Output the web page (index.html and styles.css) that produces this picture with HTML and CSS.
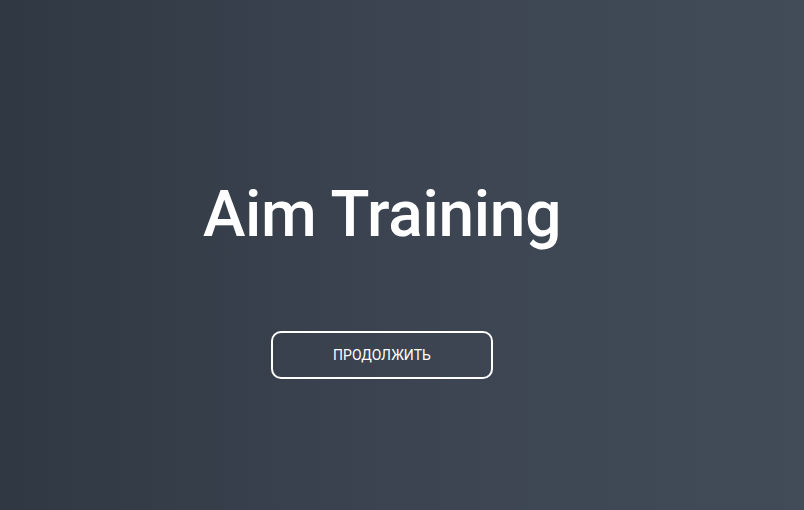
FILE: index.html
```html
<!DOCTYPE html>
<html lang="ru">
<head>
<meta charset="utf-8">
<title>Aim Training</title>
<link rel="stylesheet" href="styles.css">
</head>
<body>
<main class="screen">
  <h1 class="title">Aim Training</h1>
  <button class="start-btn" type="button">продолжить</button>
</main>
</body>
</html>
```
FILE: styles.css
```css
html, body {
  margin: 0;
  padding: 0;
  height: 100%;
}
body {
  background: linear-gradient(90deg, #303843 0%, #3b4450 50%, #424c59 100%);
  font-family: Roboto, "Liberation Sans", sans-serif;
  color: #fff;
  overflow: hidden;
}
.screen {
  box-sizing: border-box;
  height: 510px;
  padding: 177px 40px 0 0;
  display: flex;
  flex-direction: column;
  align-items: center;
}
.title {
  margin: 0;
  font-size: 64px;
  font-weight: 500;
  line-height: 75px;
  letter-spacing: -0.3px;
}
.start-btn {
  margin-top: 79px;
  width: 222px;
  height: 48px;
  background: transparent;
  border: 2px solid #fff;
  border-radius: 10px;
  color: #fff;
  font-family: Roboto, "Liberation Sans", sans-serif;
  font-size: 14px;
  text-transform: uppercase;
  cursor: pointer;
}
```
